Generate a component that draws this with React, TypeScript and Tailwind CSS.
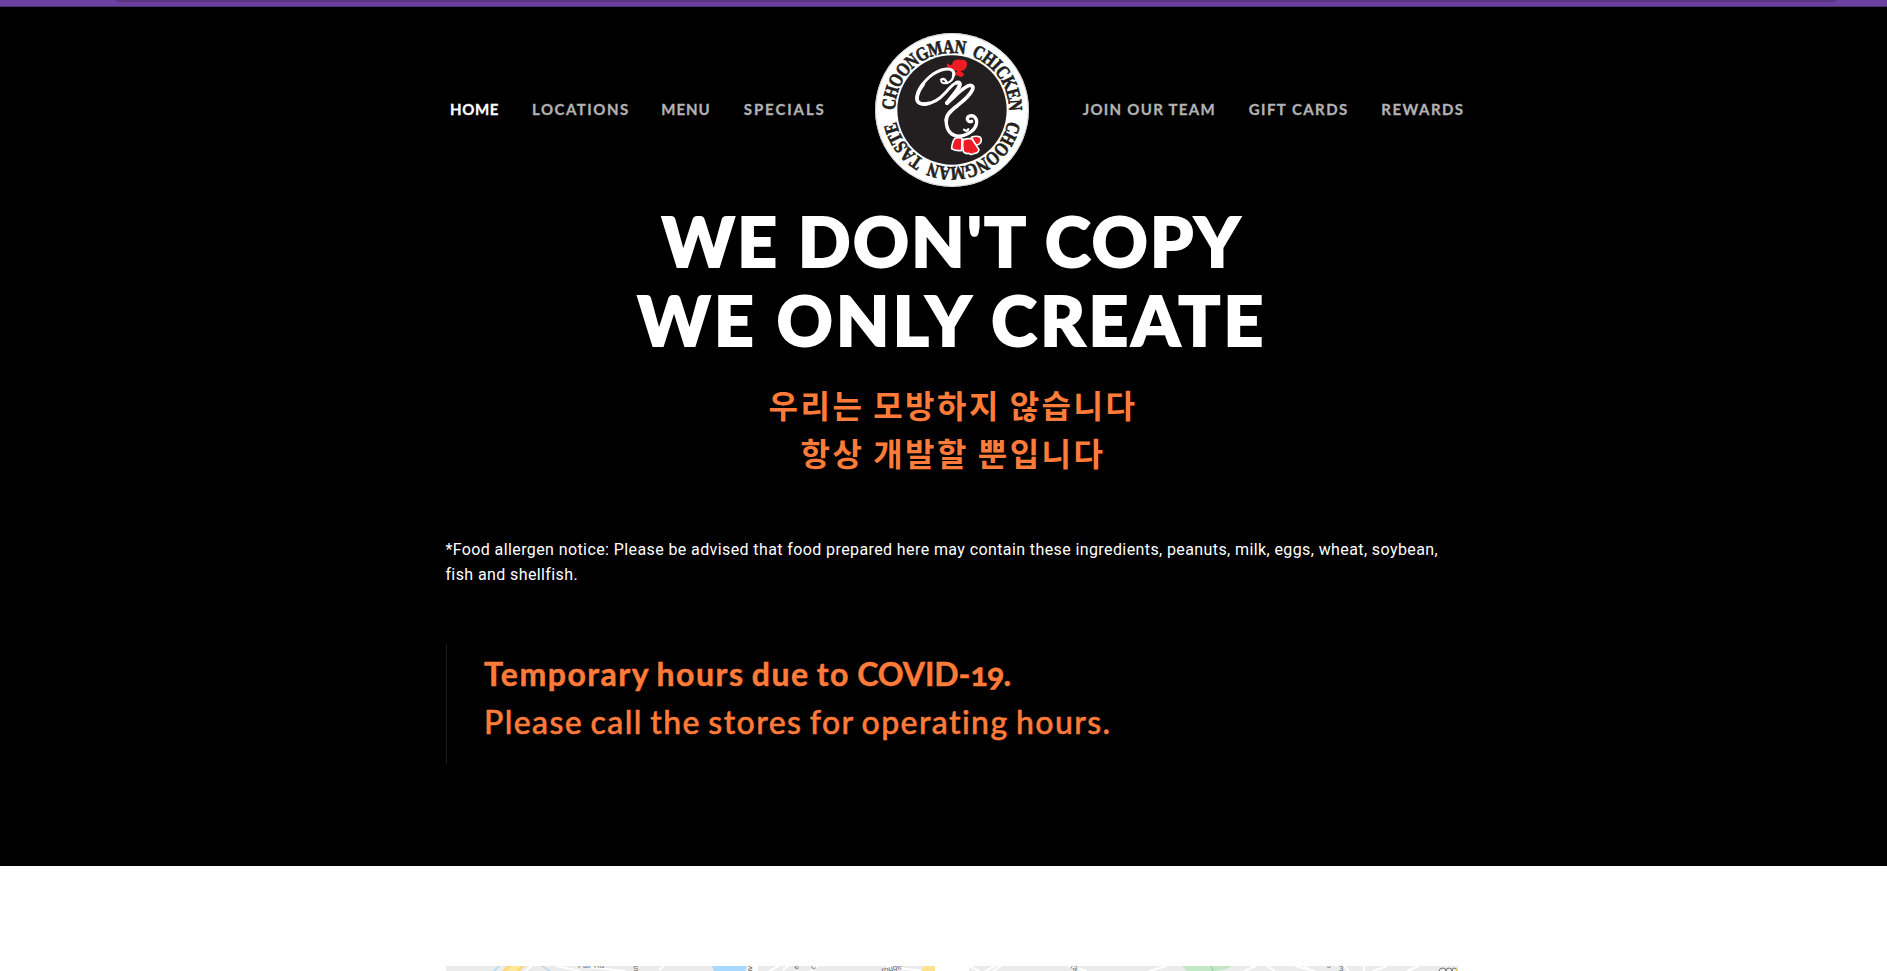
type NavItem = { label: string; box: string };

const leftNav: NavItem[] = [
  { label: "HOME", box: "w-[82px] tracking-[0.6px] text-white" },
  { label: "LOCATIONS", box: "w-[129.3px] tracking-[1.5px] text-[#b2b2b2]" },
  { label: "MENU", box: "w-[82.5px] tracking-[0.95px] text-[#b2b2b2]" },
  { label: "SPECIALS", box: "w-[130.2px] tracking-[1.9px] text-[#b2b2b2]" },
];

const rightNav: NavItem[] = [
  { label: "JOIN OUR TEAM", box: "w-[166.1px] tracking-[1.29px] text-[#b2b2b2]" },
  { label: "GIFT CARDS", box: "w-[132.6px] tracking-[1.42px] text-[#b2b2b2]" },
  { label: "REWARDS", box: "tracking-[1.45px] text-[#b2b2b2]" },
];

const glyphWidths: Record<string, number> = {
  C: 0.722, H: 0.778, O: 0.778, N: 0.722, G: 0.778, M: 0.944, A: 0.722,
  I: 0.389, K: 0.778, E: 0.667, T: 0.667, S: 0.556, " ": 0.45,
};

// Spreads the letters of a phrase clockwise between two angles (0 = top of the badge).
function RingText({ text, from, to }: { text: string; from: number; to: number }) {
  const chars = text.split("");
  const total = chars.reduce((sum, c) => sum + glyphWidths[c] + 0.04, 0);
  let run = 0;
  return (
    <>
      {chars.map((c, i) => {
        const advance = glyphWidths[c] + 0.04;
        const angle = from + ((run + advance / 2) / total) * (to - from);
        run += advance;
        return (
          <text
            key={i}
            transform={`rotate(${angle} 276 268) translate(276 97) scale(0.8 1)`}
            textAnchor="middle"
          >
            {c}
          </text>
        );
      })}
    </>
  );
}

function Logo() {
  return (
    <svg className="mt-px h-[156px] w-[156px] shrink-0" viewBox="42 34 468 468">
      <circle cx="276" cy="268" r="231" fill="#ffffff" />
      <circle cx="276" cy="268" r="229" fill="none" stroke="#b9b9b9" strokeWidth="2" />
      <circle cx="276" cy="268" r="164" fill="#231f20" />
      <g
        fill="#231f20"
        stroke="#231f20"
        strokeWidth="2"
        fontSize="58"
        fontWeight="700"
        fontFamily="'Liberation Serif', serif"
      >
        <RingText text="CHOONGMAN CHICKEN" from={-90} to={91} />
        <RingText text="CHOONGMAN TASTE" from={101} to={258} />
      </g>
      <g transform="translate(135 90)" fill="none" strokeLinecap="round" strokeLinejoin="round">
        <g fill="#ee1c25">
          <path d="M142 41c0-12 12-16 24-14 14-1 22 5 20 14 0 11-8 20-19 20 0 5 10 4 10 10-2 8-11 11-16 5-5-3-9 1-12-2 0-6 5-12 9-14-8 0-14-2-18 2-6-6-13-10-15-23 4-3 7 4 11 5z" />
          <path d="M150 263q10-4 21 0l-1 36q-15 3-30-5 1-20 10-31z" stroke="#ffffff" strokeWidth="5" />
          <path d="M199 260q14-6 26-1 7 8 1 18-6 7-14 6z" stroke="#ffffff" strokeWidth="5" />
          <path d="M174 268q14-6 27-3l21 32q-3 12-14 11-9 6-17 0-8 3-16-5-4-20-1-38z" stroke="#ffffff" strokeWidth="5" />
        </g>
        <g stroke="#ffffff">
          <path d="M145 75c6-14-6-22-26-19-34 6-66 36-80 70-9 24 0 35 22 34 24-2 44-16 60-34 13-14 22-26 34-30" strokeWidth="9" />
          <path d="M55 100c-19 24-25 50-12 57 8 5 19 4 30 1" strokeWidth="11" />
          <path d="M145 77c-2 12-12 18-20 20-2-10-8-15-17-10" strokeWidth="7" />
          <path d="M121 97q-9 2-12-4" strokeWidth="6" />
          <path d="M155 96c18-2 8 13-5 31l-24 30" strokeWidth="12" />
          <path d="M126 157c18-15 39-38 57-48 14-9 25-5 19 9-8 18-27 33-45 47-18 13-35 27-33 46" strokeWidth="11" />
          <path d="M124 205c-2 28 10 46 27 50 15 4 36-2 49-13 16-14 19-32 10-42-7-8-23-5-23 5 0 8 8 9 13 7" strokeWidth="10" />
          <path d="M177 237q9 7 13-1" strokeWidth="7" />
        </g>
      </g>
    </svg>
  );
}

function NavLinks({ items }: { items: NavItem[] }) {
  return (
    <>
      {items.map((item) => (
        <a
          key={item.label}
          className={`shrink-0 whitespace-nowrap font-[Lato,sans-serif] text-[15px] font-bold leading-5 [-webkit-text-stroke:0.3px_currentColor] ${item.box}`}
        >
          {item.label}
        </a>
      ))}
    </>
  );
}

function MapLeft() {
  return (
    <svg className="h-[5px] w-[489px]" viewBox="0 0 489 5">
      <rect width="489" height="5" fill="#ebebeb" />
      <path d="M48 5l5-5M96 0l8 5" stroke="#a5d4fb" strokeWidth="1.2" />
      <path d="M79 5l7-5M110 0l25 5M140 1l40 4M213 4l5-4M323 5l10-5M337 4l5-4M364 5l8-5M440 1l40 4" stroke="#ffffff" strokeWidth="2" />
      <path d="M56 5l5-5h18l-5 5z" fill="#fbd77a" />
      <path d="M60 5l5-5h10l-5 5z" fill="#fee79b" />
      <path d="M266 0h35l-2 5h-31z" fill="#a6d9fd" />
      <path d="M301 0h11v5h-11z" fill="#ffffff" />
      <path d="M475 5l3-5h11v5z" fill="#fde28c" />
      <g fill="#6d6d6d" fontFamily="'Liberation Sans', sans-serif" fontSize="8">
        <text x="132" y="2">Fair Rd</text>
        <text x="187" y="5">S</text>
        <text x="302" y="5" fontWeight="700">≥</text>
        <text x="350" y="4" transform="rotate(-35 350 4)">e</text>
        <text x="367" y="4" transform="rotate(-35 367 4)">c</text>
        <text x="436" y="7" transform="rotate(-12 436 7)">rouge</text>
      </g>
    </svg>
  );
}

function MapRight() {
  return (
    <svg className="h-[5px] w-[489px]" viewBox="0 0 489 5">
      <rect width="489" height="5" fill="#ebebeb" />
      <path d="M0 0l10 5M16 5l10-5M24 5l8-5M100 0l18 5M180 5l18-5M275 5l12-5M298 0l8 5M326 0l20 5M336 0l6 5M375 0l5 5M395 0v5M418 0l-14 5M438 5l12-5" stroke="#ffffff" strokeWidth="2" fill="none" />
      <path d="M213 0h50q-6 4-16 5h-29z" fill="#c2e8c3" />
      <path d="M242 0l2 5" stroke="#8cc79a" strokeWidth="1" />
      <g fill="#6d6d6d" fontFamily="'Liberation Sans', sans-serif" fontSize="8">
        <text x="101" y="2" transform="rotate(28 101 2)">ra</text>
        <text x="358" y="2">J</text>
        <text x="370" y="5">3</text>
      </g>
      <path d="M470 5q0-3 4-3 3 0 3 3 0-3 3-3 3 0 3 3 0-3 2-3 3 0 3 3" stroke="#777777" fill="none" />
      <path d="M487 3h2v2h-2z" fill="#f4c860" />
    </svg>
  );
}

export default function App() {
  return (
    <div className="h-[971px] w-full overflow-hidden bg-white">
      <div className="h-[7px] border-b border-[#4d2f75] bg-[#6c40a1] pl-[116px]">
        <div className="h-[2px] w-[1720px] rounded-b-[3px] bg-[#57357f]" />
      </div>

      <section className="h-[859px] bg-black pl-[446px] pt-6">
        <div className="w-[1012px]">
          <nav className="flex h-[156px] items-center pl-1">
            <NavLinks items={leftNav} />
            <Logo />
            <div className="flex pl-[52.7px]">
              <NavLinks items={rightNav} />
            </div>
          </nav>

          <h1 className="mt-[14px] text-center font-[Lato,sans-serif] text-[69px] font-black leading-[79px] text-white [-webkit-text-stroke:2px_#ffffff]">
            <span className="block tracking-[2.4px]">WE DON'T COPY</span>
            <span className="block tracking-[3.4px]">WE ONLY CREATE</span>
          </h1>

          <h2 className="mt-[21px] pl-[2px] text-center font-['Noto_Sans_CJK_KR',sans-serif] text-[32px] font-bold leading-[48px] tracking-[2.5px] [word-spacing:-1px] text-[#ff7b3a]">
            우리는 모방하지 않습니다
            <br />
            항상 개발할 뿐입니다
          </h2>

          <p className="-ml-px mt-[61px] whitespace-nowrap pl-[0.4px] font-[Roboto,sans-serif] text-[16px] leading-[25px] tracking-[0.4px] text-white">
            *Food allergen notice: Please be advised that food prepared here may contain these ingredients, peanuts, milk, eggs, wheat, soybean,
            <br />
            fish and shellfish.
          </p>

          <blockquote className="mt-[57px] h-[120px] whitespace-nowrap border-l border-[#1c1c1c] pl-[37px] pt-[6px] font-[Lato,sans-serif] text-[32px] leading-[48px] text-[#ff7b3a]">
            <p className="font-bold oldstyle-nums [-webkit-text-stroke:0.5px_currentColor]">
              <span className="tracking-[1.5px] [word-spacing:-2px]">Temporary hours due to </span>
              <span className="tracking-[-0.1px]">COVID-</span>
              <span className="tracking-[-0.8px]">19.</span>
            </p>
            <p className="font-medium tracking-[1.4px] [word-spacing:-2px] [-webkit-text-stroke:0.5px_currentColor]">
              Please call the stores for operating hours.
            </p>
          </blockquote>
        </div>
      </section>

      <section className="flex gap-[34px] pl-[446px] pt-[100px]">
        <MapLeft />
        <MapRight />
      </section>
    </div>
  );
}
